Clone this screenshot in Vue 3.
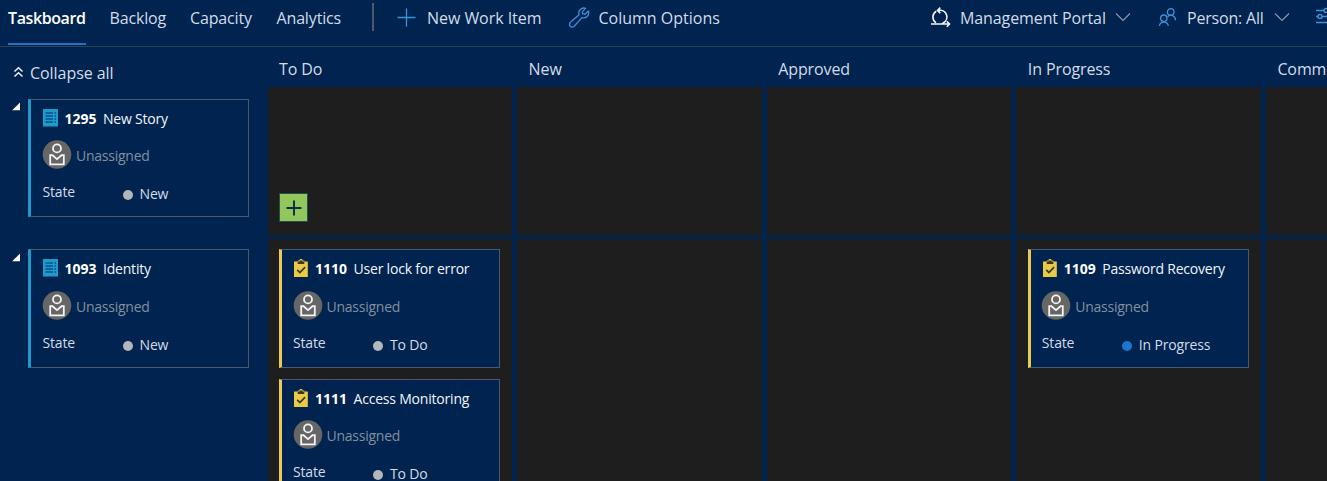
<script setup>
import { h } from 'vue'

const tabs = [
  { label: 'Taskboard', w: 78 },
  { label: 'Backlog', w: 57 },
  { label: 'Capacity', w: 63 },
  { label: 'Analytics', w: 66 },
]
const columns = ['To Do', 'New', 'Approved', 'In Progress', 'Committed']

const rows = [
  {
    story: { id: '1295', title: 'New Story', state: 'New' },
    cells: [[], [], [], [], []],
    add: true,
  },
  {
    story: { id: '1093', title: 'Identity', state: 'New' },
    cells: [
      [
        { id: '1110', title: 'User lock for error', state: 'To Do' },
        { id: '1111', title: 'Access Monitoring', state: 'To Do' },
      ],
      [],
      [],
      [{ id: '1109', title: 'Password Recovery', state: 'In Progress', active: true }],
      [],
    ],
  },
]

const StoryIcon = () =>
  h('svg', { width: 17, height: 19, viewBox: '0 0 17 19' }, [
    h('rect', { x: 0, y: 0, width: 15, height: 17.5, fill: '#1e9bca' }),
    h('path', {
      d: 'M2.500 4h7.500M11.500 4h1.500M2.500 7h7.500M11.500 7h1.500M2.500 10h7.500M11.500 10h1.500M2.500 13h7.500M11.500 13h1.500',
      stroke: '#07508a',
      'stroke-width': 1.3,
    }),
  ])

const TaskIcon = () =>
  h('svg', { width: 17, height: 19, viewBox: '0 0 17 19' }, [
    h('path', { d: 'M1 2.500h3.700V1.500h1.600C6.500.4 7.200 0 8 0s1.500.4 1.700 1.500h1.600v1H14.800v15.500H1z', fill: '#eacb45' }),
    h('path', { d: 'M4.700 2.500h1.900v-1h2.800v1h1.900v2.400H4.700z', fill: '#3a371f' }),
    h('path', { d: 'M4.200 10.800l2.700 2.700 5.200-5.400', fill: 'none', stroke: '#3a371f', 'stroke-width': 1.7 }),
  ])

const Avatar = () =>
  h('svg', { width: 30, height: 30, viewBox: '0 0 30 30' }, [
    h('circle', { cx: 15, cy: 14.5, r: 14.3, fill: '#666' }),
    h('circle', { cx: 15, cy: 8.4, r: 4, fill: 'none', stroke: '#f4f4f4', 'stroke-width': 1.8 }),
    h('path', { d: 'M8.200 15.200h2.300l4.500 3.900 4.500-3.900h2.300v9.200H8.200z', fill: 'none', stroke: '#f4f4f4', 'stroke-width': 1.8 }),
  ])

const Card = (props) => {
  const c = props.card
  return h('article', { class: ['card', props.kind] }, [
    h('div', { class: 'card-title' }, [
      h(props.kind === 'story' ? StoryIcon : TaskIcon),
      h('b', c.id),
      h('span', c.title),
    ]),
    h('div', { class: 'assignee' }, [h(Avatar), h('span', 'Unassigned')]),
    h('div', { class: 'state' }, [
      h('span', { class: 'state-label' }, 'State'),
      h('i', { class: ['dot', { active: c.active }] }),
      h('span', { class: 'state-value' }, c.state),
    ]),
  ])
}
Card.props = ['card', 'kind']
</script>

<template>
  <div class="board">
    <header class="toolbar">
      <nav class="tabs">
        <a v-for="(t, i) in tabs" :key="t.label" class="tab" :class="{ selected: i === 0 }" :style="{ width: t.w + 'px' }">{{ t.label }}</a>
      </nav>
      <span class="divider"></span>
      <div class="command add-command">
        <svg width="20" height="20" viewBox="0 0 20 20"><path d="M10.500 .5v18M1.500 9.500h18" stroke="#3b93d8" stroke-width="1.3" /></svg>
        <span>New Work Item</span>
      </div>
      <div class="command options-command">
        <svg width="22" height="22" viewBox="0 0 22 22"><path d="M17.600 1.400C13.600-.1 9.700 3.600 11.100 7.700L2.400 15.300c-2.700 2.600 1.200 6.600 3.800 3.900l7.800-8.600c4.300 1.200 7.900-2.700 6.300-6.600l-3.300 3.300-2.200-.5-.5-2.200z" fill="none" stroke="#3b93d8" stroke-width="1.300" stroke-linejoin="round" /></svg>
        <span>Column Options</span>
      </div>
      <div class="command portal-command">
        <svg width="22" height="22" viewBox="0 0 22 22" fill="none" stroke="#f1f5fb" stroke-width="1.600"><path d="M2 17h18M7 15.700A6.700 6.700 0 0 1 7.200 4.300M9.500 3.400A6.700 6.700 0 0 1 14.500 15.700L13 17M11.300 .7L8.500 3.400l2.800 2.700M17.800 14.300l2.700 2.700-2.700 2.700" /></svg>
        <span>Management Portal</span>
        <svg class="chevron" width="16" height="10" viewBox="0 0 16 10"><path d="M1 1.500l7 7 7-7" fill="none" stroke="#8e9aaa" stroke-width="1.100" /></svg>
      </div>
      <div class="command person-command">
        <svg width="20" height="20" viewBox="0 0 20 20" fill="none" stroke="#3b93d8" stroke-width="1.300"><circle cx="13.700" cy="4" r="3.300" /><path d="M10.500 8.700a4.600 4.600 0 0 1 7.900 3.500" /><circle cx="6.800" cy="10.200" r="3.200" /><path d="M2.400 18a4.500 4.500 0 0 1 8.900 0" /></svg>
        <span>Person: All</span>
        <svg class="chevron" width="16" height="10" viewBox="0 0 16 10"><path d="M1 1.500l7 7 7-7" fill="none" stroke="#8e9aaa" stroke-width="1.100" /></svg>
      </div>
      <svg class="settings" width="20" height="20" viewBox="0 0 20 20" fill="none" stroke="#3b93d8" stroke-width="1.400"><path d="M2 3.500h8M14 3.500h5M2 9.500h2M8 9.500h11M2 15.500h17" /><circle cx="12" cy="3.500" r="2" /><circle cx="6" cy="9.500" r="2" /></svg>
    </header>

    <div class="grid headings">
      <div class="collapse">
        <svg width="12" height="13" viewBox="0 0 12 13"><path d="M2.500 5.500l4-3.800 4 3.800M2.500 10.500l4-3.800 4 3.800" fill="none" stroke="#eef3fa" stroke-width="1.500" /></svg>
        <span>Collapse all</span>
      </div>
      <div v-for="c in columns" :key="c" class="heading">{{ c }}</div>
    </div>

    <div v-for="(row, r) in rows" :key="r" class="grid row" :class="{ last: r === 1 }">
      <div class="story-cell">
        <svg class="caret" width="9" height="9" viewBox="0 0 9 9"><path d="M8 .5v7.800H.2z" fill="#fff" /></svg>
        <Card :card="row.story" kind="story" />
      </div>
      <div v-for="(cell, i) in row.cells" :key="i" class="cell">
        <Card v-for="c in cell" :key="c.id" :card="c" kind="task" />
        <button v-if="row.add && i === 0" class="add" aria-label="Add task">
          <svg width="16" height="16" viewBox="0 0 16 16"><path d="M8 .5v15M.5 8h15" stroke="#0b2c4d" stroke-width="1.900" /></svg>
        </button>
      </div>
    </div>
  </div>
</template>

<style>
body {
  overflow: hidden;
  background: #00234f;
}
</style>

<style scoped>
.board {
  width: 1327px;
  height: 481px;
  overflow: hidden;
  box-sizing: border-box;
  background: #00234f;
  color: #d3dce8;
  font-family: "Open Sans", "Noto Sans", sans-serif;
  font-size: 16px;
  white-space: nowrap;
}
.toolbar {
  display: flex;
  align-items: flex-start;
  height: 46px;
  border-bottom: 1px solid #24405b;
}
.tabs {
  display: flex;
  gap: 23.5px;
  padding-left: 8px;
  width: 365px;
  box-sizing: border-box;
  flex: none;
}
.tab {
  height: 45px;
  line-height: 36px;
  box-sizing: border-box;
  letter-spacing: -0.15px;
}
.tab.selected {
  color: #fff;
  font-weight: 600;
  letter-spacing: -0.4px;
  border-bottom: 2px solid #2472bd;
}
.divider {
  width: 2px;
  height: 28px;
  margin: 3px 22px 0 7px;
  background: #4c5968;
  flex: none;
}
.command {
  display: flex;
  align-items: center;
  height: 36px;
  flex: none;
  letter-spacing: -0.05px;
}
.command svg {
  flex: none;
}
.add-command {
  width: 172px;
  gap: 11px;
}
.options-command {
  width: 361px;
  gap: 8.5px;
  letter-spacing: 0;
}
.portal-command {
  width: 228px;
  gap: 9px;
  letter-spacing: -0.1px;
}
.person-command {
  width: 157px;
  gap: 10px;
  letter-spacing: -0.2px;
}
.chevron {
  margin-left: auto;
}
.portal-command .chevron {
  margin: 0 29px 3px auto;
}
.person-command .chevron {
  margin: 0 31px 3px auto;
}
.settings {
  margin-top: 7px;
  flex: none;
}
.grid {
  display: grid;
  grid-template-columns: 262.5px repeat(5, 244.6px);
  column-gap: 5px;
}
.headings {
  height: 40px;
}
.collapse {
  display: flex;
  align-items: center;
  gap: 6px;
  padding: 12px 0 0 12px;
  height: 27px;
  letter-spacing: -0.05px;
}
.heading {
  padding: 10px 0 0 11.5px;
  line-height: 24px;
  letter-spacing: -0.1px;
}
.row {
  height: 151.5px;
}
.row.last {
  height: 243px;
}
.cell {
  display: flex;
  flex-direction: column;
  gap: 11.5px;
  background: #1e1e1e;
  border-bottom: 4px solid #062448;
  padding: 12px 12px 0 11.5px;
}
.row.last .cell {
  padding-top: 10.5px;
}
.story-cell {
  display: flex;
  align-items: flex-start;
  padding: 12px 0 0 12px;
  gap: 7px;
}
.row.last .story-cell {
  padding-top: 10.5px;
}
.caret {
  margin-top: 3px;
  flex: none;
}
.row.last .caret {
  margin-top: 4px;
}
.board :deep(.card) {
  flex: none;
  width: 221px;
  height: 118px;
  box-sizing: border-box;
  border: 1px solid #4a5a6d;
  border-left: 3px solid #eacb52;
  background: #00234f;
  padding: 9px 0 0 11px;
  font-size: 14px;
}
.row.last :deep(.card) {
  height: 118.5px;
}
.board :deep(.card.story) {
  padding-left: 11.5px;
  border-left-color: #1e9bca;
}
.board :deep(.card-title) {
  display: flex;
  align-items: center;
  height: 19px;
  color: #f2f6fb;
  letter-spacing: -0.2px;
}
.board :deep(.card-title svg) {
  margin-right: 5px;
}
.board :deep(.card-title span) {
  margin-top: -1px;
}
.board :deep(.card-title b) {
  width: 38.5px;
  margin-top: -1px;
  color: #fff;
  font-weight: 700;
  letter-spacing: 0;
}
.board :deep(.assignee) {
  display: flex;
  align-items: center;
  gap: 4px;
  height: 30px;
  margin: 12px 0 0 -0.5px;
  color: #8190a0;
  letter-spacing: -0.25px;
}
.board :deep(.state) {
  display: flex;
  height: 24px;
  margin-top: 11px;
  letter-spacing: -0.15px;
}
.board :deep(.state-label) {
  width: 80px;
  line-height: 22px;
}
.board :deep(.dot) {
  width: 10px;
  height: 10px;
  margin: 9px 7px 0 0;
  border-radius: 50%;
  background: #b3b6ba;
}
.board :deep(.dot.active) {
  background: #1579cc;
}
.board :deep(.state-value) {
  line-height: 26px;
}
.row.last :deep(.card:first-child .assignee),
.row.last .story-cell :deep(.assignee) {
  margin-top: 13px;
}
.add {
  display: grid;
  place-items: center;
  width: 29px;
  height: 29px;
  margin: auto 0 12.5px 0.4px;
  padding: 0;
  border: 1px solid #234e50;
  background: #93c65b;
}
</style>
